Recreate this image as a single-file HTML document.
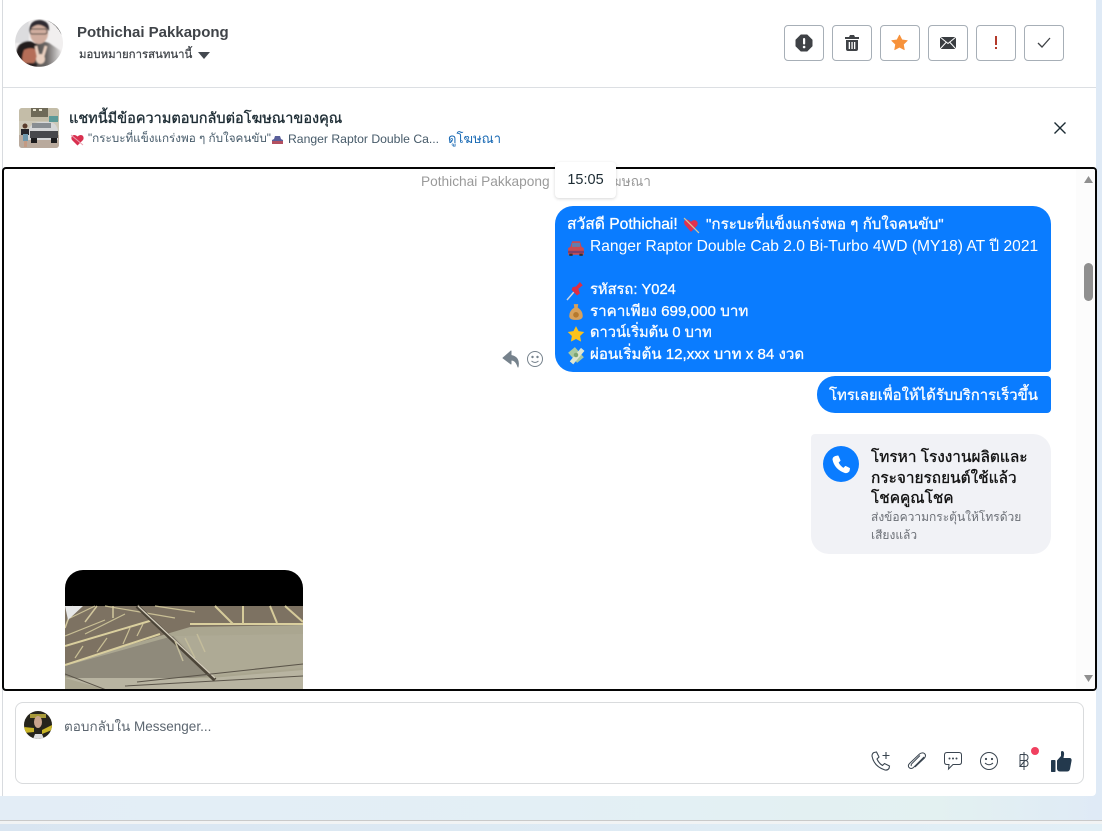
<!DOCTYPE html>
<html lang="th"><head><meta charset="utf-8"><title>Messenger</title>
<style>
html,body{margin:0;padding:0}
body{width:1102px;height:831px;position:relative;overflow:hidden;background:linear-gradient(90deg,#e3edf6 0%,#e3eff5 50%,#e3f1f1 85%,#dfeaf6 100%);font-family:"Liberation Sans","Noto Sans CJK SC","WenQuanYi Zen Hei",sans-serif;color:#1c2b33}
.a{position:absolute;white-space:nowrap}
svg{position:absolute;display:block;overflow:visible}
.btn{position:absolute;top:25px;width:38px;height:34px;border:1px solid #a7afb7;border-radius:4px;background:#fff}
.l{position:absolute;left:567px;color:#fff;font-size:15px;line-height:20px;white-space:nowrap}
.l b{font-weight:400;-webkit-text-stroke:.3px #fff}
.e{position:absolute;left:567px;width:18px;height:18px}
</style></head><body>
<div class="a" style="left:0;top:0;width:1096px;height:796px;background:#fff;border-radius:0 0 4px 0"></div>
<div class="a" style="left:2px;top:0;width:1px;height:796px;background:#d8dbdf"></div>
<div class="a" style="left:3px;top:87px;width:1093px;height:1px;background:#dcdfe3"></div>
<div class="a" style="left:0;top:820px;width:1102px;height:1px;background:#c9c9c9"></div>
<div class="a" style="left:0;top:821px;width:1102px;height:3px;background:#f1f3f4"></div>
<div class="a" style="left:0;top:824px;width:1102px;height:7px;background:linear-gradient(90deg,#d9e5f1,#e2eff6)"></div>

<svg style="left:15px;top:19px" width="48" height="48" viewBox="0 0 48 48">
<defs><clipPath id="c1"><circle cx="24" cy="24" r="24"/></clipPath><filter id="bl"><feGaussianBlur stdDeviation=".7"/></filter><linearGradient id="sh" x1="0" x2="1" y1="0" y2="0"><stop offset="0" stop-color="#4a4644"/><stop offset=".55" stop-color="#6a6664"/><stop offset="1" stop-color="#e4e2e2"/></linearGradient></defs>
<g clip-path="url(#c1)"><rect width="48" height="48" fill="#f1efef"/>
<g filter="url(#bl)">
<path d="M0 0H14V24H0Z" fill="#dcdcde"/>
<path d="M14 48 L15 28 Q24 20 34 24 L46 32 V48Z" fill="url(#sh)"/>
<ellipse cx="24" cy="14" rx="9" ry="11" fill="#d0ad9f"/>
<path d="M14 13 Q14 1 25 1 Q35 2 34 12 Q28 5 22 6 Q17 7 14 13Z" fill="#2f2c30"/>
<rect x="15" y="10" width="17" height="5" rx="2" fill="none" stroke="#333" stroke-width="1"/>
<ellipse cx="13" cy="36" rx="9" ry="10" fill="#b56e58"/>
<path d="M1 40 Q0 23 13 22 Q23 23 24 32 Q16 27 9 31 Q6 38 8 47 Q3 46 1 40Z" fill="#241c1c"/>
<path d="M23 37 L21 27 M28 37 L31 27" stroke="#ead0c0" stroke-width="2.800"/><ellipse cx="25.500" cy="40" rx="4.500" ry="5" fill="#ead0c0"/>
<path d="M8 44 H22 V48 H8Z" fill="#2a2020"/></g>
<path d="M33 1 Q42 5 47 15" stroke="#111" stroke-width="1.400" fill="none"/></g></svg>

<div class="a" style="left:77px;top:23px;font-size:15px;font-weight:700;color:#3f4348;line-height:20px">Pothichai Pakkapong</div>
<div class="a" style="left:79px;top:47px;font-size:11.400px;line-height:16px;color:#3f4348;-webkit-text-stroke:.25px #3f4348">มอบหมายการสนทนานี้</div>
<svg style="left:198px;top:52px" width="12" height="7"><path d="M0 0H12L6 7Z" fill="#444950"/></svg>

<div class="btn" style="left:784px"></div><div class="btn" style="left:832px"></div><div class="btn" style="left:880px"></div><div class="btn" style="left:928px"></div><div class="btn" style="left:976px"></div><div class="btn" style="left:1024px"></div>
<svg style="left:796px;top:35px" width="16" height="16" viewBox="0 0 16 16"><path d="M5 0H11L16 5V11L11 16H5L0 11V5Z" fill="#3f4246" stroke="#3f4246" stroke-linejoin="round"/><rect x="7" y="3" width="2.200" height="6.500" rx="1" fill="#fff"/><circle cx="8.100" cy="12" r="1.300" fill="#fff"/></svg>
<svg style="left:845px;top:35px" width="14" height="16" viewBox="0 0 14 16" fill="#3f4246"><path d="M5 0H9L10 2H14V4H0V2H4Z"/><path d="M1 5H13V14Q13 16 11 16H3Q1 16 1 14ZM3.700 7V14H5V7ZM6.400 7V14H7.700V7ZM9 7V14H10.300V7Z" fill-rule="evenodd"/></svg>
<svg style="left:891px;top:34px" width="17" height="17" viewBox="0 0 24 24"><path d="M12 1.500L15.400 8.200 23 9.300 17.500 14.600 18.800 22.200 12 18.600 5.200 22.200 6.500 14.600 1 9.300 8.600 8.200Z" fill="#f7923b" stroke="#f7923b" stroke-linejoin="round"/></svg>
<svg style="left:940px;top:37px" width="16" height="12" viewBox="0 0 16 12"><rect width="16" height="12" fill="#3a3d41"/><path d="M0 0L8 6.500 16 0M0 12L6 5.500M16 12L10 5.500" stroke="#fff" stroke-width="1" fill="none"/></svg>
<div class="a" style="left:995px;top:36px;width:2px;height:9px;background:#b3392a"></div>
<div class="a" style="left:995px;top:47px;width:2px;height:2px;background:#b3392a"></div>
<svg style="left:1037px;top:37px" width="14" height="11"><path d="M1 6L5 10 13 1" stroke="#3f4246" stroke-width="1.300" fill="none"/></svg>

<svg style="left:19px;top:108px" width="40" height="40" viewBox="0 0 40 40">
<defs><clipPath id="c2"><rect width="40" height="40" rx="3"/></clipPath></defs>
<g clip-path="url(#c2)"><rect width="40" height="40" fill="#cdc8b8"/><rect width="40" height="13" fill="#c4bda8"/><rect x="12" y="0" width="17" height="9" fill="#6f6a58"/><rect x="14" y="1" width="3" height="2" fill="#e8e4d0"/><rect x="20" y="1" width="3" height="2" fill="#e8e4d0"/><rect x="30" y="8" width="9" height="6" fill="#5d9a98"/><rect y="27" width="40" height="13" fill="#b9aa9d"/>
<path d="M9 23 Q12 14 22 14 H31 Q38 15 39 23 V32 H9Z" fill="#d6d7d8"/><rect x="13" y="15" width="19" height="5" fill="#888d92"/><rect x="11" y="23" width="28" height="7" fill="#47484c"/><rect x="12" y="30" width="6" height="5" fill="#1c1c1e"/><rect x="32" y="30" width="6" height="5" fill="#1c1c1e"/>
<rect x="2" y="21" width="8" height="6" fill="#26262a"/><rect x="4" y="26" width="5" height="7" fill="#6e97ab"/><circle cx="6" cy="18" r="2.500" fill="#5a3c2c"/><rect x="5" y="33" width="3" height="6" fill="#c39a83"/></g></svg>
<div class="a" style="left:69px;top:110px;font-size:14.500px;line-height:18px;color:#1c2b33;-webkit-text-stroke:.35px #1c2b33">แชทนี้มีข้อความตอบกลับต่อโฆษณาของคุณ</div>
<svg style="left:71px;top:134px" width="13" height="12" viewBox="0 0 13 12"><path d="M6.500 11.500L1 6Q-.5 3.500 1.500 1.500 4 0 6.500 2.500 9 0 11.500 1.500 13.500 3.500 12 6Z" fill="#d9304f"/><path d="M0 1L12 11" stroke="#e8a0b0" stroke-width="1"/></svg>
<div class="a" style="left:88px;top:131px;font-size:11.700px;line-height:16px;color:#465a69">"กระบะที่แข็งแกร่งพอ ๆ กับใจคนขับ"</div>
<svg style="left:272px;top:135px" width="11" height="10" viewBox="0 0 11 10"><path d="M2 4L3 1H8L9 4 11 5V9H0V5Z" fill="#5a5f9a"/><rect x="0" y="6" width="11" height="3" fill="#b35060"/></svg>
<div class="a" style="left:288px;top:131px;font-size:12.200px;line-height:16px;color:#465a69">Ranger Raptor Double Ca...</div>
<div class="a" style="left:448px;top:130px;font-size:13px;line-height:17px;color:#1a6ab4">ดูโฆษณา</div>
<svg style="left:1054px;top:122px" width="12" height="12"><path d="M.5 .5L11.500 11.500M11.500 .5L.5 11.500" stroke="#1c2b33" stroke-width="1.400"/></svg>

<!-- chat -->
<div class="a" style="left:2px;top:167px;width:1091px;height:520px;border:2px solid #050505;border-radius:4px;overflow:hidden">
 <div class="a" style="left:1072px;top:0;width:19px;height:520px;background:#fcfcfc"></div>
 <div class="a" style="left:61px;top:401px;width:238px;height:125px;background:#000;border-radius:18px 18px 0 0;overflow:hidden">
  <svg style="left:0;top:36px" width="238" height="85" viewBox="0 0 238 85">
   <rect width="238" height="85" fill="#aaa690"/>
   <path d="M0 0H238V19L125 21 0 58Z" fill="#7d7262"/>
   <path d="M0 60L108 30 146 70 40 80 0 70Z" fill="#8f8a7b"/>
   <path d="M110 30L238 28V62L146 70Z" fill="#aeaa95"/>
   <path d="M0 72L46 85H238V64L146 72Z" fill="#b8b4a1"/>
   <path d="M0 59L95 28M0 40L88 14M125 18H238" stroke="#dacf9e" stroke-width="2" fill="none"/>
   <path d="M10 52L18 40M32 46L42 32M58 38L65 22M72 30L78 18M0 30L40 14M20 28L60 8M40 0L110 12M5 12L30 0M90 0L130 6" stroke="#c9bf95" stroke-width="1.200" fill="none"/>
   <path d="M0 22L8 0M20 16L32 0M48 0V12" stroke="#d2c79d" stroke-width="1.500" fill="none"/>
   <path d="M150 0L168 18M178 0V18M205 0L212 17M220 0L238 16" stroke="#d6cb9a" stroke-width="2" fill="none"/>
   <path d="M72 0L150 74" stroke="#4c4538" stroke-width="4"/><path d="M73 0L150 72" stroke="#d3ccbb" stroke-width="1.400"/>
   <path d="M0 68L44 85M72 76L238 58M60 80L238 70" stroke="#5a5449" stroke-width="1" fill="none"/>
   <path d="M110 35L118 55M120 32L130 52M132 28L140 46" stroke="#c3bc9b" stroke-width="1.500" fill="none"/>
   <path d="M0 0H18L3 14Z" fill="#e6e7e7"/>
  </svg>
 </div>
</div>
<div class="a" style="left:1084px;top:263px;width:9px;height:38px;background:#8f8f8f;border-radius:5px"></div>
<svg style="left:1084px;top:176px" width="9" height="7"><path d="M4.500 0L9 7H0Z" fill="#8f8f8f"/></svg>
<svg style="left:1084px;top:675px" width="9" height="7"><path d="M4.500 7L9 0H0Z" fill="#8f8f8f"/></svg>

<div class="a" style="left:421px;top:173px;font-size:13.700px;line-height:18px;color:#9a9a9a">Pothichai Pakkapong</div>
<div class="a" style="right:451px;top:173px;font-size:13.700px;line-height:18px;color:#9a9a9a">โฆษณา</div>
<div class="a" style="left:555px;top:162px;width:61px;height:36px;background:#fff;border-radius:4px;box-shadow:0 1px 3px rgba(0,0,0,.16);font-size:14.500px;line-height:37px;text-align:center;color:#1c2b33">15:05</div>

<div class="a" style="left:555px;top:206px;width:496px;height:166px;background:#0a7cff;border-radius:18px 18px 4px 18px"></div>
<div class="l" style="top:215px;font-size:15.600px"><b>สวัสดี Pothichai!</b></div>
<div class="l" style="top:215px;left:706px;font-size:15.200px"><b>"กระบะที่แข็งแกร่งพอ ๆ กับใจคนขับ"</b></div>
<div class="l" style="top:237px;left:590px;font-size:15.600px">Ranger Raptor Double Cab 2.0 Bi-Turbo 4WD (MY18) AT ปี 2021</div>
<div class="l" style="top:280px;left:590px;font-size:14.700px"><b>รหัสรถ: Y024</b></div>
<div class="l" style="top:302px;left:590px;font-size:15.200px"><b>ราคาเพียง 699,000 บาท</b></div>
<div class="l" style="top:323px;left:590px;font-size:14.700px"><b>ดาวน์เริ่มต้น 0 บาท</b></div>
<div class="l" style="top:345px;left:590px;font-size:15.100px"><b>ผ่อนเริ่มต้น 12,xxx บาท x 84 งวด</b></div>
<svg style="left:683px;top:217px" width="17" height="17" viewBox="0 0 16 16"><path d="M7.500 14L1.500 7Q0 3.500 3 2.500 5.500 2 7.500 4.500 10 2 12.500 3.500 15 5.500 13 8.500Z" fill="#e0314f"/><path d="M1 1L15 15" stroke="#d8c49a" stroke-width="1.200"/></svg>
<svg class="e" style="top:239px" viewBox="0 0 16 16"><path d="M3 7L4.500 2H11.500L13 7 15 8V14H1V8Z" fill="#c94b52"/><rect x="4.500" y="3.500" width="7" height="3.500" fill="#5f7fb0"/><rect x="1" y="10.500" width="14" height="2" fill="#7c3f6a"/><rect x="2" y="13" width="3" height="2" fill="#333"/><rect x="11" y="13" width="3" height="2" fill="#333"/></svg>
<svg class="e" style="top:282px" viewBox="0 0 16 16"><path d="M0 16L6 9" stroke="#ccd6e6" stroke-width="1.300"/><path d="M4 7L9 12 11.500 10 10 6 14 3 11.500 0 8 4 5 4.500Z" fill="#dd2e44"/></svg>
<svg class="e" style="top:303px" viewBox="0 0 16 16"><path d="M6 1H10L9.500 4Q14 7 14 11.500 14 15 8 15 2 15 2 11.500 2 7 6.500 4Z" fill="#d7a05a"/><circle cx="8" cy="10.500" r="2.500" fill="#b5792e"/></svg>
<svg class="e" style="top:325px" viewBox="0 0 24 24"><path d="M12 1.500L15.400 8.200 23 9.300 17.500 14.600 18.800 22.200 12 18.600 5.200 22.200 6.500 14.600 1 9.300 8.600 8.200Z" fill="#fcc21b"/></svg>
<svg class="e" style="top:346px" viewBox="0 0 16 16"><path d="M1 6L7 1 15 10 9 15Z" fill="#a9c9a0"/><path d="M4 15L14 3" stroke="#dfe6d0" stroke-width="4"/><circle cx="8" cy="8" r="2" fill="#7da573"/></svg>

<svg style="left:502px;top:350px" width="18" height="18" viewBox="0 0 18 18"><path d="M9 1L1 8 9 14V10Q14 10 16 17 18 7 9 5.500Z" fill="#76828c" stroke="#76828c" stroke-linejoin="round"/></svg>
<svg style="left:526px;top:350px" width="18" height="18" viewBox="0 0 18 18" fill="none" stroke="#76828c"><circle cx="9" cy="9" r="7.500"/><path d="M5.500 11Q9 14 12.500 11"/><circle cx="6.500" cy="7" r=".7" fill="#76828c"/><circle cx="11.500" cy="7" r=".7" fill="#76828c"/></svg>

<div class="a" style="left:817px;top:376px;width:234px;height:37px;background:#0a7cff;border-radius:18px 4px 4px 18px"></div>
<div class="l" style="top:386px;left:829px;font-size:14.900px"><b>โทรเลยเพื่อให้ได้รับบริการเร็วขึ้น</b></div>

<div class="a" style="left:811px;top:434px;width:240px;height:120px;background:#f1f2f6;border-radius:4px 18px 18px 18px"></div>
<svg style="left:823px;top:446px" width="36" height="36" viewBox="0 0 36 36"><circle cx="18" cy="18" r="18" fill="#0a7cff"/><path d="M12.500 10.500L15 10 17 14.500 15 16.500Q17 20.500 20.500 22.500L22.500 20.500 26.500 22.500 26 25Q24.500 27 22 26.500 12 23 10 13.500 10 11.500 12.500 10.500Z" fill="#fff" stroke="#fff" stroke-linejoin="round"/></svg>
<div class="a" style="left:871px;top:448px;font-size:15.400px;line-height:20.500px;color:#111;-webkit-text-stroke:.35px #111">โทรหา โรงงานผลิตและ<br>กระจายรถยนต์ใช้แล้ว<br>โชคคูณโชค</div>
<div class="a" style="left:871px;top:508px;font-size:12px;line-height:18px;color:#6b6f76">ส่งข้อความกระตุ้นให้โทรด้วย<br>เสียงแล้ว</div>

<!-- composer -->
<div class="a" style="left:15px;top:702px;width:1067px;height:80px;border:1px solid #d9dbdd;border-radius:8px;background:#fff"></div>
<svg style="left:24px;top:711px" width="28" height="28" viewBox="0 0 28 28"><defs><clipPath id="c3"><circle cx="14" cy="14" r="14"/></clipPath></defs><g clip-path="url(#c3)"><rect width="28" height="28" fill="#26241c"/><path d="M0 16L10 17V21L0 22ZM18 19L28 14V19L18 23Z" fill="#c9b527"/><path d="M6 3H22V7H6Z" fill="#a89a3a"/><ellipse cx="14" cy="11" rx="4" ry="6" fill="#c9a48c"/><path d="M9 28L11 23H18L20 28Z" fill="#ddd"/></g></svg>
<div class="a" style="left:64px;top:718px;font-size:13.500px;line-height:18px;color:#5c6670">ตอบกลับใน Messenger...</div>
<svg style="left:871px;top:751px" width="20" height="20" viewBox="0 0 20 20" fill="none" stroke="#3a4550" stroke-width="1.100"><path d="M3 1.500L5.500 1 8 6 6 8Q8 12.500 11.500 14.500L13.500 12.500 18.500 15 18 17.500Q16.500 19.500 14 19 3 15.500 1 5 1 2.500 3 1.500Z"/><path d="M15 1V8M11.500 4.500H18.500"/></svg>
<svg style="left:907px;top:752px" width="20" height="18" viewBox="0 0 20 18" fill="none" stroke="#3a4550" stroke-width="1"><path d="M17 5L6.500 15.500Q4 17.500 2 15.500 .5 13.500 2.500 11.500L12.500 2Q15 0 17.500 1.500 19.500 3.500 17.500 6L8 15M13 3.500L5 11.500Q3.500 13 4.500 14"/></svg>
<svg style="left:944px;top:752px" width="18" height="18" viewBox="0 0 18 18" fill="none" stroke="#3a4550" stroke-width="1"><path d="M3 .5H15Q17.500 .5 17.500 3V10Q17.500 12.500 15 12.500H9L4.500 17 5 12.500H3Q.5 12.500 .5 10V3Q.5 .5 3 .5Z"/><circle cx="5.500" cy="6.500" r=".5" fill="#3a4550"/><circle cx="9" cy="6.500" r=".5" fill="#3a4550"/><circle cx="12.500" cy="6.500" r=".5" fill="#3a4550"/></svg>
<svg style="left:980px;top:752px" width="18" height="18" viewBox="0 0 18 18" fill="none" stroke="#3a4550" stroke-width="1"><circle cx="9" cy="9" r="8.500"/><path d="M5 11Q9 14.500 13 11"/><circle cx="6" cy="7" r=".6" fill="#3a4550"/><circle cx="12" cy="7" r=".6" fill="#3a4550"/></svg>
<svg style="left:1019px;top:752px" width="10" height="18" viewBox="0 0 10 18" fill="none" stroke="#3a4550" stroke-width="1"><path d="M1 2.500H6Q9 2.500 9 5.500 9 8.500 6 8.500H1M6 8.500Q9 8.500 9 11.500 9 14.500 6 14.500H1ZM1 2.500V14.500M5 0V18"/></svg>
<div class="a" style="left:1031px;top:747px;width:8px;height:8px;border-radius:50%;background:#f0405f"></div>
<svg style="left:1051px;top:751px" width="21" height="21" viewBox="0 0 21 21" fill="#23394d"><rect x="0" y="9" width="4.500" height="12" rx=".8"/><path d="M6 9.500L10 5V1Q10 0 11.500 0 13.500 .5 13 4L12.500 7H19Q21 7.500 20.500 10L19 18Q18.500 20.500 16 20.500H9Q6.500 20.500 6 18Z"/></svg>
</body></html>
